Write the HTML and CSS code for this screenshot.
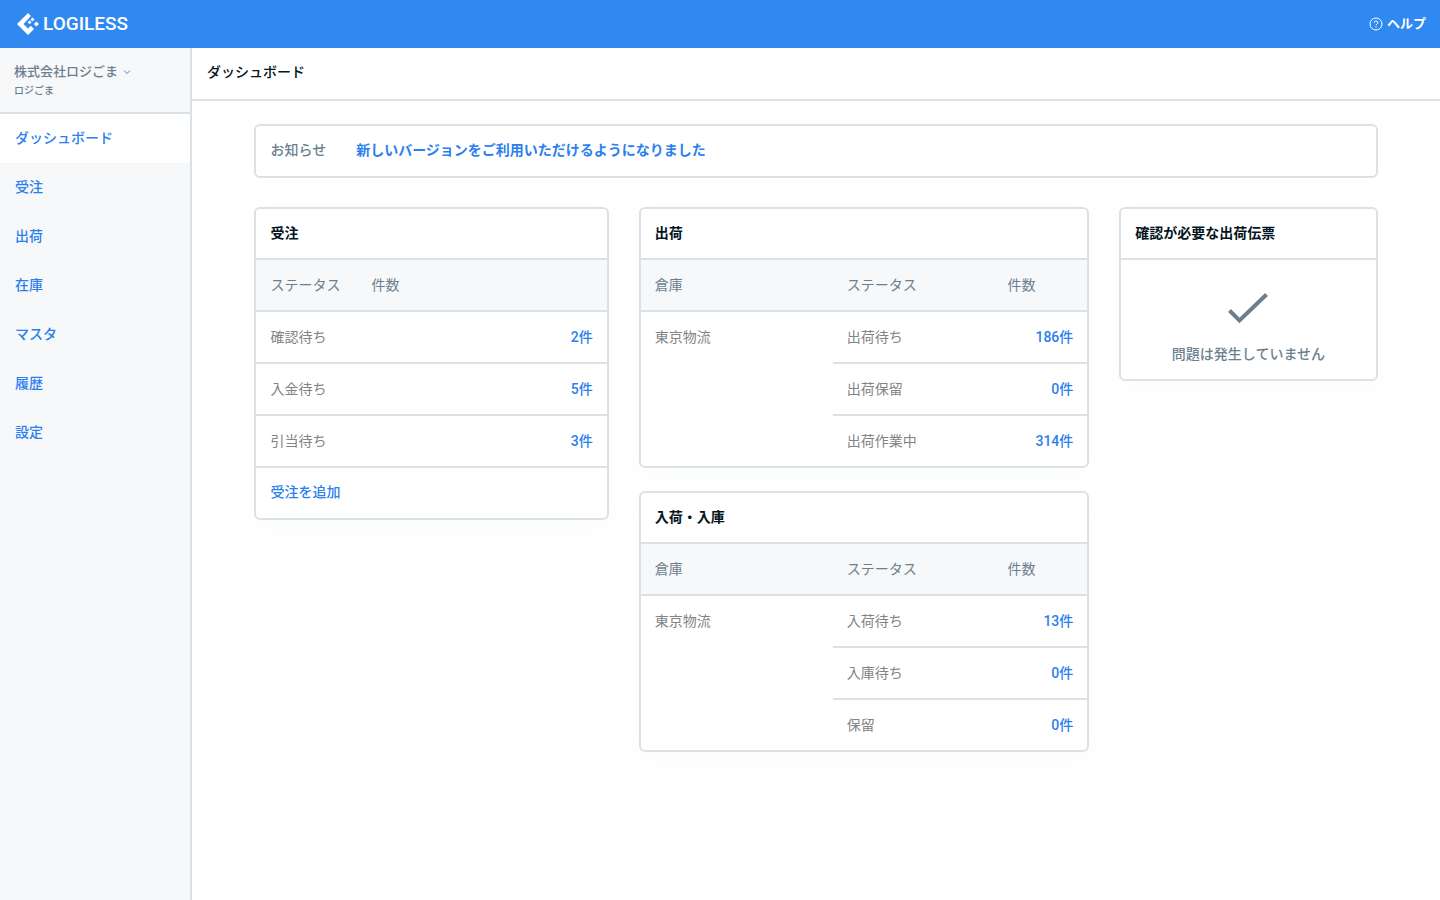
FILE: index.html
```html
<!DOCTYPE html>
<html lang="ja">
<head>
<meta charset="utf-8">
<meta name="viewport" content="width=device-width, initial-scale=1">
<title>ダッシュボード | LOGILESS</title>
<link rel="stylesheet" href="styles.css">
</head>
<body>
<header class="topbar">
  <a class="brand" href="#">
    <svg class="brand-mark" viewBox="0 0 22 22" aria-hidden="true">
      <path d="M11 0 14 3 6.500 11 11 15.500 13.800 12.800 17 16 11 22 0 11Z"/>
      <path d="M15.500 4.500 17.500 6.500 15.500 8.500 13.500 6.500ZM19.400 8.400 22 11 19.400 13.600 16.800 11ZM12.600 7.200 14.600 9.200 12.600 11.200 10.600 9.200Z"/>
    </svg>
    <span class="brand-name">LOGILESS</span>
  </a>
  <a class="help" href="#">
    <svg class="help-icon" viewBox="0 0 14 14" aria-hidden="true">
      <circle cx="7" cy="7" r="6"/>
      <path d="M5.200 5.700a1.800 1.800 0 1 1 2.700 1.500C7.200 7.600 7 7.800 7 8.500M7 9.500v1.200"/>
    </svg>
    ヘルプ
  </a>
</header>
<div class="shell">
  <aside class="sidebar">
    <button class="account" type="button">
      <span class="account-company">株式会社ロジごま
        <svg class="chevron" viewBox="0 0 8 8" aria-hidden="true"><path d="M1 2.500 4 5.500 7 2.500"/></svg>
      </span>
      <span class="account-user">ロジごま</span>
    </button>
    <nav class="nav">
      <a class="nav-link nav-link-active" href="#">ダッシュボード</a>
      <a class="nav-link" href="#">受注</a>
      <a class="nav-link" href="#">出荷</a>
      <a class="nav-link" href="#">在庫</a>
      <a class="nav-link" href="#">マスタ</a>
      <a class="nav-link" href="#">履歴</a>
      <a class="nav-link" href="#">設定</a>
    </nav>
  </aside>
  <main class="main">
    <h1 class="page-title">ダッシュボード</h1>
    <div class="content">
      <section class="notice">
        <span class="notice-label">お知らせ</span>
        <a class="notice-link" href="#">新しいバージョンをご利用いただけるようになりました</a>
      </section>
      <div class="grid">
        <div class="col col-orders">
          <section class="card">
            <h2 class="card-title">受注</h2>
            <table class="table table-orders">
              <thead><tr><th class="status">ステータス</th><th>件数</th></tr></thead>
              <tbody>
                <tr><td>確認待ち</td><td class="count"><a href="#">2件</a></td></tr>
                <tr><td>入金待ち</td><td class="count"><a href="#">5件</a></td></tr>
                <tr><td>引当待ち</td><td class="count"><a href="#">3件</a></td></tr>
              </tbody>
            </table>
            <a class="card-action" href="#">受注を追加</a>
          </section>
        </div>
        <div class="col col-shipping">
          <section class="card">
            <h2 class="card-title">出荷</h2>
            <table class="table table-warehouse">
              <thead><tr><th class="place">倉庫</th><th class="status">ステータス</th><th>件数</th></tr></thead>
              <tbody>
                <tr><td class="place" rowspan="3">東京物流</td><td>出荷待ち</td><td class="count"><a href="#">186件</a></td></tr>
                <tr><td>出荷保留</td><td class="count"><a href="#">0件</a></td></tr>
                <tr><td>出荷作業中</td><td class="count"><a href="#">314件</a></td></tr>
              </tbody>
            </table>
          </section>
          <section class="card">
            <h2 class="card-title">入荷・入庫</h2>
            <table class="table table-warehouse">
              <thead><tr><th class="place">倉庫</th><th class="status">ステータス</th><th>件数</th></tr></thead>
              <tbody>
                <tr><td class="place" rowspan="3">東京物流</td><td>入荷待ち</td><td class="count"><a href="#">13件</a></td></tr>
                <tr><td>入庫待ち</td><td class="count"><a href="#">0件</a></td></tr>
                <tr><td>保留</td><td class="count"><a href="#">0件</a></td></tr>
              </tbody>
            </table>
          </section>
        </div>
        <div class="col col-alerts">
          <section class="card">
            <h2 class="card-title">確認が必要な出荷伝票</h2>
            <div class="empty">
              <svg class="empty-icon" viewBox="0 0 42 32" aria-hidden="true"><path d="M2.500 18.500 12.500 28.500 39.500 2.500"/></svg>
              <p class="empty-text">問題は発生していません</p>
            </div>
          </section>
        </div>
      </div>
    </div>
  </main>
</div>
</body>
</html>
```

FILE: styles.css
```css
:root {
  --blue: #2f89f0;
  --link: #2b80ee;
  --line: #dae1e7;
  --panel: #f7f8fa;
  --slate: #6c7f8f;
  --gray: #838383;
  --ink: #041420;
}

* {
  box-sizing: border-box;
}

body {
  margin: 0;
  min-height: 100vh;
  display: flex;
  flex-direction: column;
  background: #fff;
  color: var(--gray);
  font: 14px/20px Roboto, "Noto Sans CJK JP", sans-serif;
}

a {
  color: var(--link);
  text-decoration: none;
}

.topbar {
  height: 48px;
  padding: 0 14px 0 17px;
  display: flex;
  align-items: center;
  justify-content: space-between;
  background: var(--blue);
}

.brand {
  display: flex;
  align-items: center;
  gap: 4px;
  color: #fff;
}

.brand-mark {
  width: 22px;
  height: 22px;
  fill: #fff;
}

.brand-name {
  font-size: 19px;
  font-weight: 500;
}

.help {
  display: flex;
  align-items: center;
  gap: 4px;
  color: #fff;
  font-size: 13px;
  font-weight: 700;
}

.help-icon {
  width: 14px;
  height: 14px;
  fill: none;
  stroke: #fff;
}

.shell {
  flex: 1;
  display: flex;
}

.sidebar {
  flex: none;
  width: 192px;
  border-right: 2px solid var(--line);
  background: var(--panel);
}

.account {
  width: 100%;
  padding: 14px 14px 13px;
  display: flex;
  flex-direction: column;
  gap: 1px;
  border: 0;
  border-bottom: 2px solid var(--line);
  background: none;
  color: var(--slate);
  font: inherit;
  font-weight: 500;
  text-align: left;
}

.account-company {
  display: flex;
  align-items: center;
  gap: 5px;
  font-size: 13px;
  line-height: 20px;
}

.account-user {
  font-size: 10px;
  line-height: 16px;
}

.chevron {
  width: 8px;
  height: 8px;
  fill: none;
  stroke: var(--slate);
}

.nav-link {
  display: block;
  padding: 14px 15px 15px;
  font-weight: 500;
}

.nav-link-active {
  background: #fff;
}

.main {
  flex: 1;
  min-width: 0;
}

.page-title {
  margin: 0;
  padding: 14px 15px 17px;
  border-bottom: 2px solid var(--line);
  color: var(--ink);
  font-size: 14px;
  font-weight: 500;
}

.content {
  width: 90%;
  margin: 0 auto;
  padding: 23px 0;
}

.notice {
  margin-bottom: 29px;
  padding: 14px 14px 16px;
  display: flex;
  gap: 30px;
  border: 2px solid var(--line);
  border-radius: 6px;
}

.notice-label {
  color: var(--slate);
  font-weight: 500;
}

.notice-link {
  font-weight: 700;
}

.grid {
  display: grid;
  grid-template-columns: repeat(12, minmax(0, 1fr));
  gap: 30px;
  align-items: start;
}

.col {
  display: grid;
  gap: 23px;
}

.col-orders {
  grid-column: span 4;
}

.col-shipping {
  grid-column: span 5;
}

.col-alerts {
  grid-column: span 3;
}

.card {
  overflow: hidden;
  border: 2px solid var(--line);
  border-radius: 6px;
  background: #fff;
  box-shadow: 0 6px 24px rgba(60, 120, 110, 0.02);
}

.card-title {
  margin: 0;
  padding: 14px 14px 15px;
  border-bottom: 2px solid var(--line);
  color: var(--ink);
  font-size: 14px;
  font-weight: 700;
}

.table {
  width: 100%;
  border-spacing: 0;
  table-layout: fixed;
}

.table th,
.table td {
  padding: 15px 14px;
  border-bottom: 2px solid var(--line);
  font-weight: 400;
  text-align: left;
  vertical-align: top;
}

.table th {
  background: var(--panel);
  color: var(--slate);
}

.table .count {
  font-weight: 500;
  text-align: right;
}

.table-orders .status {
  width: 101px;
}

.table-warehouse .place {
  width: 43%;
}

.table-warehouse .status {
  width: 36%;
}

.table-warehouse tbody tr:last-child td,
.table-warehouse tbody .place {
  border-bottom: 0;
}

.card-action {
  display: block;
  padding: 14px 14px 16px;
  font-weight: 500;
}

.empty {
  padding: 32px 14px 15px;
  display: flex;
  flex-direction: column;
  align-items: center;
  gap: 20px;
  color: var(--slate);
  font-weight: 500;
}

.empty-icon {
  width: 42px;
  height: 32px;
  fill: none;
  stroke: currentColor;
  stroke-width: 4;
}

.empty-text {
  margin: 0;
}
```
